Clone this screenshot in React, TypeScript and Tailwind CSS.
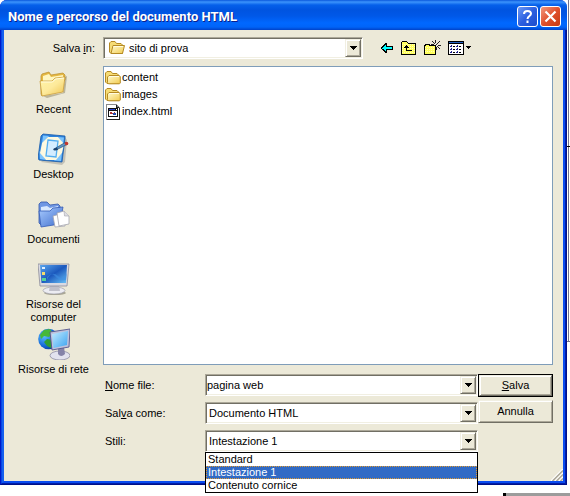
import { useState, type ReactNode } from 'react';

const STYLES = ['Standard', 'Intestazione 1', 'Contenuto cornice'];

const FIELD =
  'grid h-[22px] w-full border border-t-[#aca899] border-l-[#aca899] border-r-white border-b-white bg-white p-px shadow-[inset_1px_1px_#716f64,inset_-1px_-1px_#f1efe2]';

const RAISED =
  'border border-t-[#f1efe2] border-l-[#f1efe2] border-r-[#716f64] border-b-[#716f64] bg-[#ece9d8] shadow-[inset_1px_1px_#ffffff,inset_-1px_-1px_#aca899]';

const FolderIcon = ({ open = false }: { open?: boolean }) => (
  <svg className="size-4 shrink-0" viewBox="0 0 16 16" aria-hidden="true">
    <defs>
      <linearGradient id="folder" x1="0" y1="0" x2="1" y2="1">
        <stop offset="0" stopColor="#fffbd0" />
        <stop offset="1" stopColor="#f2cb4e" />
      </linearGradient>
    </defs>
    <path d="M.5 12V3L2 1.500H6L7.500 3.500H12L13.500 5V13.500H2Z" fill="#f6dc75" stroke="#b58a24" />
    <path
      d={open ? 'M4 5.500H15.500L13.500 13.500H2Z' : 'M2.500 12.500V7L4 5.500H14L15.300 6.500V13L14.500 13.800H3.500Z'}
      fill="url(#folder)"
      stroke="#b58a24"
    />
    <path d={open ? 'M4.500 6.500H14' : 'M4 6.500H14'} stroke="#fffbe0" />
  </svg>
);

const HtmlIcon = () => (
  <svg className="size-4 shrink-0" viewBox="0 0 16 16" shapeRendering="crispEdges" aria-hidden="true">
    <path d="M1 0H12V1H13V2H14V3H15V16H1Z" fill="#8a8a8a" />
    <path d="M2 1H11V4H14V15H2Z" fill="#fff" />
    <path d="M11 1H12V3H14V4H11ZM14 4H15V16H2V15H14Z" fill="#222" />
    <path d="M3 4H13V13H3Z" fill="#111" />
    <path d="M4 5H10V6H4Z" fill="#2a45c8" />
    <path d="M11 5H12V6H11Z" fill="#fff" />
    <path d="M4 7H12V12H4Z" fill="#fff" />
    <path d="M5 8H7V10H5Z" fill="#a33" />
    <path d="M8 9H11V11H8Z" fill="#234bb0" />
    <path d="M7 9H8V10H7ZM9 8H10V9H9Z" fill="#a33" />
  </svg>
);

const RecentIcon = () => (
  <svg className="size-8" viewBox="0 0 32 32" aria-hidden="true">
    <defs>
      <linearGradient id="recent" x1="0" y1="0" x2="1" y2="1">
        <stop offset="0" stopColor="#fff5a8" />
        <stop offset=".5" stopColor="#fdea9c" />
        <stop offset="1" stopColor="#efc550" />
      </linearGradient>
    </defs>
    <path d="M5 28L25 25L27 9L29 8L27 25L9 30Z" fill="#8a815d" opacity=".5" />
    <path d="M3 26V8L4 6L11 4L13 7L25 5L27 7V12L4 28Z" fill="#e5b843" stroke="#b98c2b" strokeWidth=".7" />
    <path d="M5 8L11 6L13 9L25 7V13L5 17Z" fill="#fff6c0" />
    <path d="M2 13L14 13L17 10L27 9L25 24L4 28Z" fill="url(#recent)" stroke="#c3932d" strokeWidth=".7" />
    <path d="M3 14L14.500 14L17.500 11L26 10" fill="none" stroke="#fffbe0" />
  </svg>
);

const DesktopIcon = () => (
  <svg className="size-8" viewBox="0 0 32 32" aria-hidden="true">
    <path d="M3 29L24 32L27 29L29 7L27 4Z" fill="#777" opacity=".35" />
    <path d="M3 3L5 1L27 3V5L24 29L1 27L0 25Z" fill="#2e82dc" stroke="#175aaa" strokeWidth=".8" />
    <path d="M5 2.500L11 3L4 11ZM20 4L26 4.500L25 12ZM1.500 18L8 27L2 26ZM24 20L23 28L16 27.500Z" fill="#7cc4fd" />
    <path d="M10 4H20L26 11L24 20L18 27H8L2 20L4 10Z" fill="#fdf9e0" />
    <path d="M10 7L20 8L18 24L8 23Z" fill="#d3edff" stroke="#52aef0" strokeWidth="1.3" />
    <path d="M16 16L28 9L30 11L18 17Z" fill="#5f93c4" stroke="#24567f" strokeWidth=".7" />
    <path d="M15 16L19 14.500L20 17L16 17.500Z" fill="#163f6b" />
    <circle cx="28.500" cy="10.500" r="1.800" fill="#c6382c" />
  </svg>
);

const DocumentsIcon = () => (
  <svg className="size-8" viewBox="0 0 32 32" aria-hidden="true">
    <defs>
      <linearGradient id="documents" x1="0" y1="0" x2="1" y2="1">
        <stop offset="0" stopColor="#a9ccff" />
        <stop offset="1" stopColor="#3d6bcb" />
      </linearGradient>
    </defs>
    <path d="M1 25V6L3 4H9L12 7L20 6L22 8V12L4 28Z" fill="#6f97e4" stroke="#3457a8" strokeWidth=".8" />
    <path d="M3 9L9 8L12 10L20 8V14H3Z" fill="#d9e9ff" />
    <path d="M1 13L12 13L15 10L25 9L22 26L3 29Z" fill="url(#documents)" stroke="#345bb5" strokeWidth=".8" />
    <path d="M15 18L22 16L27 20V28L17 29Z" fill="#fff" stroke="#a4a4ad" strokeWidth=".8" />
    <path d="M19 15L26 13L31 18V26L21 28Z" fill="#fff" stroke="#a4a4ad" strokeWidth=".8" />
    <path d="M26 13L26.500 18L31 18" fill="#dedee3" stroke="#a4a4ad" strokeWidth=".6" />
  </svg>
);

const ComputerIcon = () => (
  <svg className="size-8" viewBox="0 0 32 32" aria-hidden="true">
    <defs>
      <linearGradient id="screen" x1="0" y1="0" x2="1" y2="1">
        <stop offset="0" stopColor="#5aa6ee" />
        <stop offset=".5" stopColor="#1b58bd" />
        <stop offset="1" stopColor="#69c2f7" />
      </linearGradient>
    </defs>
    <ellipse cx="17" cy="30" rx="11" ry="2" fill="#aaa795" />
    <ellipse cx="16" cy="27.500" rx="11" ry="3.500" fill="#ececf2" stroke="#a0a0ac" strokeWidth=".7" />
    <path d="M12 22H21L22 28H11Z" fill="#c0c0ca" />
    <path d="M0 1H31L29 23H2Z" fill="#dadae2" stroke="#8c8c9a" strokeWidth=".8" />
    <path d="M2 2H29L28 20H3.500Z" fill="url(#screen)" />
    <path d="M9 14Q15 8 20 13T29 10L28 17Q21 18 17 13T9 17Z" fill="#3d8ee2" opacity=".6" />
    <path d="M4 4H7V6H4Z" fill="#e0efff" />
    <path d="M4 9H7V12H4Z" fill="#f4dd6e" />
    <path d="M4 15H8V18H4Z" fill="#55d29a" />
  </svg>
);

const NetworkIcon = () => (
  <svg className="size-8" viewBox="0 0 32 32" aria-hidden="true">
    <defs>
      <radialGradient id="globe" cx=".3" cy=".35" r=".8">
        <stop offset="0" stopColor="#5cc0ff" />
        <stop offset=".6" stopColor="#1468d8" />
        <stop offset="1" stopColor="#08308e" />
      </radialGradient>
      <linearGradient id="panel" x1="0" y1="0" x2="1" y2="1">
        <stop offset="0" stopColor="#c4ecff" />
        <stop offset="1" stopColor="#3aa3f1" />
      </linearGradient>
    </defs>
    <circle cx="10.500" cy="11" r="10.300" fill="url(#globe)" />
    <path d="M6 2L12 1L15 5L11 9L6 8L3 11L2 7Z" fill="#46b83a" />
    <path d="M9 11L14 12L13 20L9 18L6 14Z" fill="#2f9e34" />
    <ellipse cx="22" cy="27.500" rx="10" ry="4.500" fill="#e2e2ee" stroke="#8e8da5" strokeWidth=".8" />
    <path d="M20 19H26L27 26Q23 30 20 26Z" fill="#8583a8" />
    <path d="M12 4L32 1L31 19L14 22Z" fill="#bfc2dc" stroke="#55558a" strokeWidth=".9" />
    <path d="M14 6L30 3L29 17L15.500 20Z" fill="url(#panel)" />
  </svg>
);

const PLACES = [
  { label: 'Recent', icon: <RecentIcon /> },
  { label: 'Desktop', icon: <DesktopIcon /> },
  { label: 'Documenti', icon: <DocumentsIcon /> },
  { label: 'Risorse del computer', icon: <ComputerIcon /> },
  { label: 'Risorse di rete', icon: <NetworkIcon /> },
];

const FILES = [
  { name: 'content', icon: <FolderIcon /> },
  { name: 'images', icon: <FolderIcon /> },
  { name: 'index.html', icon: <HtmlIcon /> },
];

const BackIcon = () => (
  <svg className="h-4 w-[14px]" viewBox="0 0 14 16" shapeRendering="crispEdges" aria-hidden="true">
    <path d="M1 7H2V6H3V5H4V4H5V3H7V6H13V10H7V13H5V12H4V11H3V10H2V9H1Z" fill="#000" />
    <path d="M2 8H3V7H4V6H5V5H6V7H12V9H6V11H5V10H4V9H2Z" fill="#0ff" />
  </svg>
);

const UpIcon = () => (
  <svg className="size-4" viewBox="0 0 16 16" shapeRendering="crispEdges" aria-hidden="true">
    <path d="M1 1H6V2H7V3H15V15H0V2H1Z" fill="#000" />
    <path d="M1 2H6V3H7V4H14V14H1Z" fill="#ffff5c" />
    <path d="M1 4.500H14M1 6.500H14M1 8.500H14M1 10.500H14M1 12.500H14" stroke="#fffdc0" strokeDasharray="1 1" />
    <path d="M5 5H6V6H7V7H8V8H6V10H11V11H5V8H3V7H4V6H5Z" fill="#000" />
  </svg>
);

const NewFolderIcon = () => (
  <svg className="h-4 w-[17px]" viewBox="0 0 17 16" shapeRendering="crispEdges" aria-hidden="true">
    <path d="M1 4H6V5H12V15H0V5H1Z" fill="#000" />
    <path d="M2 5H5V6H11V14H1V6H2Z" fill="#ffff5c" />
    <path d="M1 7.500H11M1 9.500H11M1 11.500H11" stroke="#fffdc0" strokeDasharray="1 1" />
    <path
      d="M11 0H12V3H11ZM12 4H13V5H12ZM8 1H9V2H8ZM9 2H10V3H9ZM14 2H15V3H14ZM15 1H16V2H15ZM13 3H14V4H13ZM10 3H11V4H10ZM7 4H10V5H7ZM14 5H17V6H14ZM13 6H14V7H13ZM14 7H15V8H14ZM15 8H16V9H15ZM12 7H13V10H12Z"
      fill="#222"
    />
  </svg>
);

const ViewIcon = () => (
  <svg className="h-4 w-6" viewBox="0 0 24 16" shapeRendering="crispEdges" aria-hidden="true">
    <path d="M0 1H16V15H0Z" fill="#000" />
    <path d="M1 2H15V3H1Z" fill="#2563c4" />
    <path d="M1 4H15V14H1Z" fill="#fff" />
    <path d="M3 5H4V6H3ZM9 5H10V6H9ZM3 8H4V9H3ZM9 8H10V9H9ZM3 11H4V12H3ZM9 11H10V12H9Z" fill="#20208a" />
    <path d="M2 6H4V7H2ZM8 6H10V7H8ZM2 9H4V10H2ZM8 9H10V10H8ZM2 12H4V13H2ZM8 12H10V13H8Z" fill="#20208a" />
    <path d="M5 6H7V7H5ZM11 6H13V7H11ZM5 9H7V10H5ZM11 9H13V10H11ZM5 12H7V13H5ZM11 12H13V13H11Z" fill="#000" />
    <path d="M18 6H23V7H22V8H21V9H20V8H19V7H18Z" fill="#000" />
  </svg>
);

const TOOLS = [
  { label: 'Indietro', icon: <BackIcon /> },
  { label: 'Livello superiore', icon: <UpIcon /> },
  { label: 'Nuova cartella', icon: <NewFolderIcon /> },
  { label: 'Visualizza', icon: <ViewIcon /> },
];

const DropArrow = () => (
  <span
    className={`pointer-events-none col-start-1 row-start-1 flex h-[18px] w-4 items-center justify-center justify-self-end ${RAISED}`}
  >
    <svg className="h-1 w-[7px]" viewBox="0 0 7 4" shapeRendering="crispEdges" aria-hidden="true">
      <path d="M0 0H7V1H6V2H5V3H4V4H3V3H2V2H1V1H0Z" fill="#000" />
    </svg>
  </span>
);

const CELL = 'col-start-1 row-start-1 h-[18px] w-full min-w-0 appearance-none bg-transparent outline-none';

const FormRow = ({ id, label, children }: { id: string; label: ReactNode; children: ReactNode }) => (
  <div className="grid grid-cols-[102px_1fr] items-center">
    <label htmlFor={id} className="pl-0.5">
      {label}
    </label>
    {children}
  </div>
);

const TitleBar = () => (
  <header className="flex h-[30px] items-center justify-between rounded-t-[7px] bg-[linear-gradient(to_bottom,#0a58dc_0px,#3c94fc_2px,#0560ea_5px,#0054e0_10px,#0058e8_16px,#0068ff_23px,#0064f8_27px,#0042c8_30px)] pr-[6px] pl-2">
    <h1 className="pt-1 font-[Roboto,'Open_Sans',sans-serif] text-[13px] leading-4 font-bold text-white [text-shadow:1px_1px_#0a1f8c]">
      Nome e percorso del documento HTML
    </h1>
    <div className="flex gap-0.5 pt-[3px]">
      <button
        type="button"
        aria-label="Guida"
        className="flex size-[21px] items-center justify-center rounded-[3px] border border-white bg-linear-to-br from-[#6c98f5] via-[#2c5fe0] to-[#1c4ccc]"
      >
        <svg className="size-[15px]" viewBox="0 0 15 15" fill="none" stroke="#fff" strokeWidth="2" aria-hidden="true">
          <path d="M4 5Q4 2 7.500 2T11 4.800C11 7 7.500 7 7.500 10M7.500 11.500V14" />
        </svg>
      </button>
      <button
        type="button"
        aria-label="Chiudi"
        className="flex size-[21px] items-center justify-center rounded-[3px] border border-white bg-linear-to-br from-[#f0967c] via-[#e0502c] to-[#c63a12]"
      >
        <svg className="size-[15px]" viewBox="0 0 15 15" stroke="#fff" strokeWidth="2.2" aria-hidden="true">
          <path d="M2.500 2.500L12.500 12.500M12.500 2.500L2.500 12.500" />
        </svg>
      </button>
    </div>
  </header>
);

export default function App() {
  const [style, setStyle] = useState(STYLES[1]);

  return (
    <main className="bg-white font-['Liberation_Sans',Arial,sans-serif] text-[11px] leading-[13px] text-black">
      <div className="flex">
        <div className="min-w-0 flex-1 rounded-t-[7px] bg-[#0c50f0] shadow-[inset_1px_0_#0019cf]">
          <TitleBar />
          <div className="border-x border-b border-l-[#0019c8] border-r-[#00108a] border-b-[#00108a]">
            <div className="border-x border-b border-l-[#0846e4] border-r-[#001ea8] border-b-[#001ea8]">
              <div className="border-x-2 border-b-2 border-l-[#1560ee] border-r-[#0a4cf0] border-b-[#0a4cf0]">
                <div className="relative bg-[#ece9d8] pt-[7px] pr-[10px] pb-[29px]">
                  <div className="flex items-center">
                    <label htmlFor="look-in" className="w-[99px] shrink-0 pr-2 text-right">
                      Salva <span className="underline">i</span>n:
                    </label>
                    <div className="w-[260px]">
                      <div className={`${FIELD} items-center`}>
                        <span className="col-start-1 row-start-1 pl-1">
                          <FolderIcon open />
                        </span>
                        <select id="look-in" className={`${CELL} pl-6`}>
                          <option>sito di prova</option>
                        </select>
                        <DropArrow />
                      </div>
                    </div>
                    <div className="ml-[17px] flex gap-[7px]">
                      {TOOLS.map((tool) => (
                        <button key={tool.label} type="button" aria-label={tool.label}>
                          {tool.icon}
                        </button>
                      ))}
                    </div>
                  </div>

                  <div className="mt-[7px] grid grid-cols-[99px_1fr]">
                    <nav className="pt-0.5">
                      {PLACES.map((place) => (
                        <button
                          key={place.label}
                          type="button"
                          className="flex min-h-[65px] w-full flex-col items-center gap-[3px] px-3"
                        >
                          {place.icon}
                          <span>{place.label}</span>
                        </button>
                      ))}
                    </nav>

                    <div>
                      <ul className="min-h-[299px] border border-[#7f9db9] bg-white px-px pt-0.5">
                        {FILES.map((file) => (
                          <li key={file.name}>
                            <button type="button" className="flex h-[17px] items-center gap-px">
                              {file.icon}
                              {file.name}
                            </button>
                          </li>
                        ))}
                      </ul>

                      <form className="mt-[9px] flex" onSubmit={(e) => e.preventDefault()}>
                        <div className="flex min-w-0 flex-1 flex-col gap-[6px]">
                          <FormRow
                            id="file-name"
                            label={
                              <>
                                <span className="underline">N</span>ome file:
                              </>
                            }
                          >
                            <div className={FIELD}>
                              <input id="file-name" type="text" defaultValue="pagina web" className={`${CELL} pr-4`} />
                              <DropArrow />
                            </div>
                          </FormRow>
                          <FormRow
                            id="file-type"
                            label={
                              <>
                                Sal<span className="underline">v</span>a come:
                              </>
                            }
                          >
                            <div className={FIELD}>
                              <select id="file-type" className={`${CELL} pl-0.5`}>
                                <option>Documento HTML</option>
                              </select>
                              <DropArrow />
                            </div>
                          </FormRow>
                          <FormRow id="style" label="Stili:">
                            <div className="relative">
                              <div className={FIELD}>
                                <select
                                  id="style"
                                  value={style}
                                  onChange={(e) => setStyle(e.target.value)}
                                  className={`${CELL} pl-0.5`}
                                >
                                  {STYLES.map((name) => (
                                    <option key={name}>{name}</option>
                                  ))}
                                </select>
                                <DropArrow />
                              </div>
                              <ul
                                role="listbox"
                                aria-label="Stili"
                                className="absolute top-full left-0 w-full border border-black bg-white"
                              >
                                {STYLES.map((name) => (
                                  <li
                                    key={name}
                                    role="option"
                                    aria-selected={name === style}
                                    onClick={() => setStyle(name)}
                                    className="border border-transparent pl-px leading-[11px] aria-selected:border-dotted aria-selected:border-[#e09a30] aria-selected:bg-[#316ac5] aria-selected:text-white"
                                  >
                                    {name}
                                  </li>
                                ))}
                              </ul>
                            </div>
                          </FormRow>
                        </div>

                        <div className="flex w-[75px] flex-col gap-[3px]">
                          <div className="border border-black">
                            <button type="submit" className={`h-[21px] w-full ${RAISED}`}>
                              <span className="underline">S</span>alva
                            </button>
                          </div>
                          <button type="button" className={`h-[23px] w-full ${RAISED}`}>
                            Annulla
                          </button>
                        </div>
                      </form>
                    </div>
                  </div>

                  <svg className="absolute right-0 bottom-0 size-3" viewBox="0 0 12 12" aria-hidden="true">
                    <path d="M0 12L12 0M4 12L12 4M8 12L12 8" stroke="#fff" strokeWidth="1.5" />
                    <path d="M1.500 12L12 1.500M5.500 12L12 5.500M9.500 12L12 9.500" stroke="#aca899" strokeWidth="1.5" />
                  </svg>
                </div>
              </div>
            </div>
          </div>
        </div>
        <div className="flex w-[3px] flex-col">
          <div className="ml-px h-[146px] w-px bg-[#73738c]" />
          <div className="h-px bg-black" />
          <div className="ml-px h-[194px] border-l border-[#73738c]" />
          <div className="h-px bg-[#73738c]" />
        </div>
      </div>
      <div className="mt-2 ml-auto flex h-[3px] w-[67px]">
        <div className="w-[3px] bg-black" />
        <div className="flex-1 bg-[#9c9c9c]" />
      </div>
    </main>
  );
}
